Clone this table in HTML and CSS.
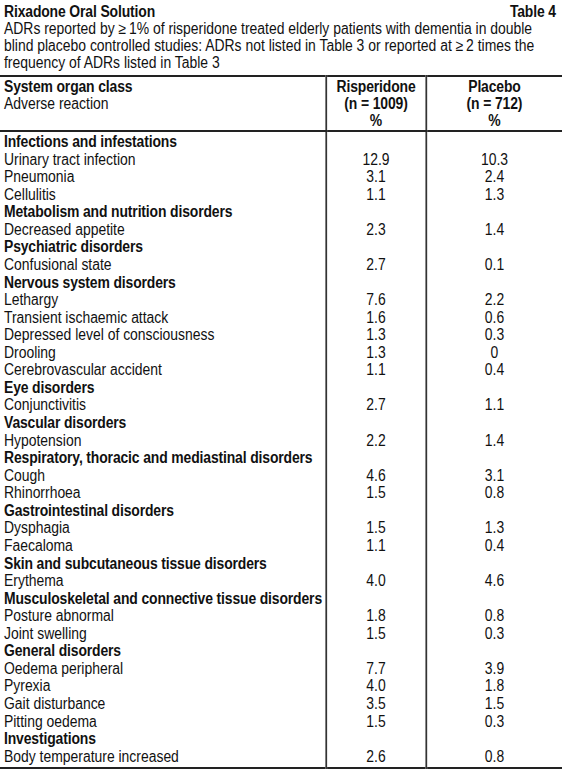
FILE: index.html
```html
<!DOCTYPE html>
<html lang="en">
<head>
<meta charset="utf-8">
<title>Rixadone Oral Solution – Table 4</title>
<link rel="stylesheet" href="styles.css">
</head>
<body>
<div class="frame">
<div class="page">
<div class="title-row">
  <span>Rixadone Oral Solution</span>
  <span>Table 4</span>
</div>
<p class="desc">ADRs reported by ≥&#8201;1% of risperidone treated elderly patients with dementia in double<br>blind placebo controlled studies: ADRs not listed in Table 3 or reported at ≥&#8201;2 times the<br>frequency of ADRs listed in Table 3</p>
<table class="adr">
  <colgroup>
    <col class="c-label">
    <col class="c-ris">
    <col class="c-pla">
  </colgroup>
  <thead>
    <tr>
      <th class="label"><span class="b">System organ class</span><br><span class="n">Adverse reaction</span></th>
      <th class="num">Risperidone<br>(n = 1009)<br>%</th>
      <th class="num">Placebo<br>(n = 712)<br>%</th>
    </tr>
  </thead>
  <tbody>
    <tr class="first"><td class="label h">Infections and infestations</td><td class="num"></td><td class="num"></td></tr>
    <tr><td class="label">Urinary tract infection</td><td class="num">12.9</td><td class="num">10.3</td></tr>
    <tr><td class="label">Pneumonia</td><td class="num">3.1</td><td class="num">2.4</td></tr>
    <tr><td class="label">Cellulitis</td><td class="num">1.1</td><td class="num">1.3</td></tr>
    <tr><td class="label h">Metabolism and nutrition disorders</td><td class="num"></td><td class="num"></td></tr>
    <tr><td class="label">Decreased appetite</td><td class="num">2.3</td><td class="num">1.4</td></tr>
    <tr><td class="label h">Psychiatric disorders</td><td class="num"></td><td class="num"></td></tr>
    <tr><td class="label">Confusional state</td><td class="num">2.7</td><td class="num">0.1</td></tr>
    <tr><td class="label h">Nervous system disorders</td><td class="num"></td><td class="num"></td></tr>
    <tr><td class="label">Lethargy</td><td class="num">7.6</td><td class="num">2.2</td></tr>
    <tr><td class="label">Transient ischaemic attack</td><td class="num">1.6</td><td class="num">0.6</td></tr>
    <tr><td class="label">Depressed level of consciousness</td><td class="num">1.3</td><td class="num">0.3</td></tr>
    <tr><td class="label">Drooling</td><td class="num">1.3</td><td class="num">0</td></tr>
    <tr><td class="label">Cerebrovascular accident</td><td class="num">1.1</td><td class="num">0.4</td></tr>
    <tr><td class="label h">Eye disorders</td><td class="num"></td><td class="num"></td></tr>
    <tr><td class="label">Conjunctivitis</td><td class="num">2.7</td><td class="num">1.1</td></tr>
    <tr><td class="label h">Vascular disorders</td><td class="num"></td><td class="num"></td></tr>
    <tr><td class="label">Hypotension</td><td class="num">2.2</td><td class="num">1.4</td></tr>
    <tr><td class="label h">Respiratory, thoracic and mediastinal disorders</td><td class="num"></td><td class="num"></td></tr>
    <tr><td class="label">Cough</td><td class="num">4.6</td><td class="num">3.1</td></tr>
    <tr><td class="label">Rhinorrhoea</td><td class="num">1.5</td><td class="num">0.8</td></tr>
    <tr><td class="label h">Gastrointestinal disorders</td><td class="num"></td><td class="num"></td></tr>
    <tr><td class="label">Dysphagia</td><td class="num">1.5</td><td class="num">1.3</td></tr>
    <tr><td class="label">Faecaloma</td><td class="num">1.1</td><td class="num">0.4</td></tr>
    <tr><td class="label h">Skin and subcutaneous tissue disorders</td><td class="num"></td><td class="num"></td></tr>
    <tr><td class="label">Erythema</td><td class="num">4.0</td><td class="num">4.6</td></tr>
    <tr><td class="label h">Musculoskeletal and connective tissue disorders</td><td class="num"></td><td class="num"></td></tr>
    <tr><td class="label">Posture abnormal</td><td class="num">1.8</td><td class="num">0.8</td></tr>
    <tr><td class="label">Joint swelling</td><td class="num">1.5</td><td class="num">0.3</td></tr>
    <tr><td class="label h">General disorders</td><td class="num"></td><td class="num"></td></tr>
    <tr><td class="label">Oedema peripheral</td><td class="num">7.7</td><td class="num">3.9</td></tr>
    <tr><td class="label">Pyrexia</td><td class="num">4.0</td><td class="num">1.8</td></tr>
    <tr><td class="label">Gait disturbance</td><td class="num">3.5</td><td class="num">1.5</td></tr>
    <tr><td class="label">Pitting oedema</td><td class="num">1.5</td><td class="num">0.3</td></tr>
    <tr><td class="label h">Investigations</td><td class="num"></td><td class="num"></td></tr>
    <tr class="last"><td class="label">Body temperature increased</td><td class="num">2.6</td><td class="num">0.8</td></tr>
  </tbody>
</table>
</div>
</div>
</body>
</html>
```

FILE: styles.css
```css
html, body {
  margin: 0;
  padding: 0;
  background: #fff;
}

body {
  width: 562px;
}

/* Clipping frame at the viewport width */
.frame {
  width: 562px;
  overflow: hidden;
}

/* The source uses a condensed grotesque; Liberation Sans is narrowed
   horizontally to approximate that face. */
.page {
  width: 646px;
  transform: scaleX(0.87);
  transform-origin: 0 0;
  font-family: "Liberation Sans", Arial, sans-serif;
  font-size: 16px;
  color: #111;
}

.title-row {
  display: flex;
  justify-content: space-between;
  padding: 3px 7px 0 4.6px;
  line-height: 17px;
  font-weight: bold;
  letter-spacing: -0.15px;
}

.desc {
  margin: 0;
  padding: 0 4.6px;
  line-height: 17px;
}

.adr {
  width: 646px;
  margin-top: 4px;
  border-collapse: collapse;
  table-layout: fixed;
  border-top: 2px solid #222;
  border-bottom: 2px solid #222;
}

.c-label { width: 374.7px; }
.c-ris { width: 115px; }
.c-pla { width: auto; }

.adr th,
.adr td {
  padding: 0;
  vertical-align: top;
  white-space: nowrap;
}

.adr th {
  line-height: 17px;
  padding-top: 1px;
  padding-bottom: 1px;
  border-bottom: 2px solid #222;
  font-weight: bold;
  letter-spacing: -0.15px;
}

.adr td {
  line-height: 17.57px;
  height: 17.57px;
}

.adr .label {
  text-align: left;
  padding-left: 4.6px;
}

.adr .num {
  text-align: center;
  border-left: 2px solid #333;
}

.adr th .n {
  font-weight: normal;
  letter-spacing: 0;
}

.adr td.h {
  font-weight: bold;
  letter-spacing: -0.15px;
}

.adr tr.first td {
  padding-top: 1px;
}

.adr tr.last td {
  padding-bottom: 1.5px;
}
```
